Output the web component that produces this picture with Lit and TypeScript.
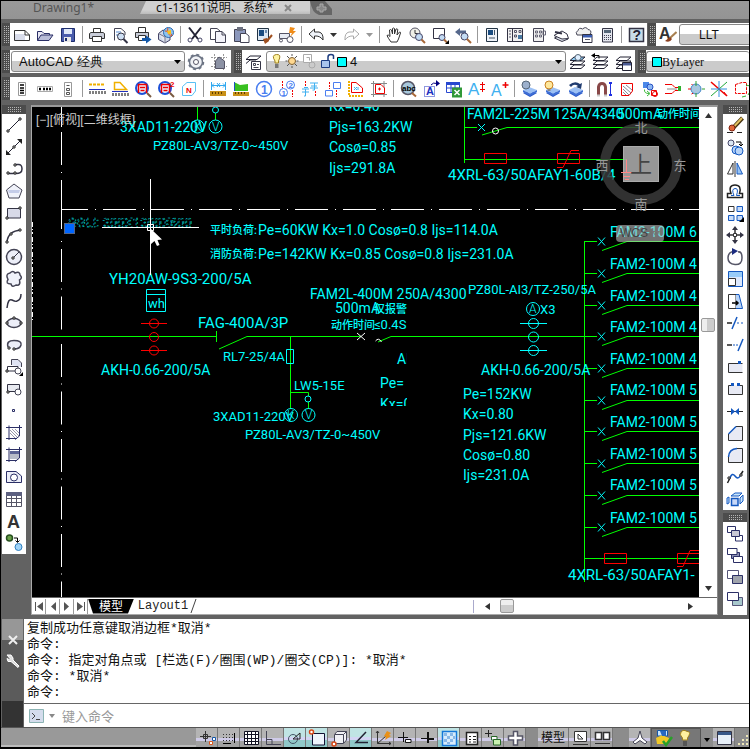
import { LitElement, html, svg, css, nothing, type SVGTemplateResult } from "lit";
import { customElement, property } from "lit/decorators.js";

const INK = "#223";
const NAVY = "#2b2f66";

/** A stroked (and optionally filled) path. */
const p = (d: string, stroke = INK, fill = "none", w = 1) =>
  svg`<path d=${d} stroke=${stroke} fill=${fill} stroke-width=${w}></path>`;
/** A filled shape without outline. */
const f = (d: string, fill: string) => svg`<path d=${d} fill=${fill}></path>`;
const c = (x: number, y: number, r: number, stroke = INK, fill = "none", w = 1) =>
  svg`<circle cx=${x} cy=${y} r=${r} stroke=${stroke} fill=${fill} stroke-width=${w}></circle>`;
const t = (x: number, y: number, size: number, fill: string, s: string) =>
  svg`<text x=${x} y=${y} font-size=${size} fill=${fill} font-weight="bold">${s}</text>`;
const node = (x: number, y: number) => p(`M${x - 1} ${y - 1}h2v2h-2z`, "#222", "#fff");

const sheets = (top = "#fff") => svg`
  ${p("M2 15.5L6 12H17L13 15.5z", INK, "#fff")}${p("M2 11.5L6 8H17L13 11.5z", INK, "#fff")}
  ${p("M2 7.5L6 4H17L13 7.5z", INK, top)}`;
const blueSheets = svg`${f("M3 13l6-3 8 3-7 4z", "#2b59c8")}${f("M3 10l6-3 8 3-7 4z", "#9cc0f4")}${f("M3 10l7 4 7-4v2l-7 4-7-4z", "#3f6fd6")}`;
const glass = svg`${c(8, 8, 6, "#1c50d8", "#eaf2ff", 2)}${p("M13 13l4 4", "#7a5a40", "none", 2)}`;
const findGlyph = p("M4.500 13V4.500H12.500V13M6 7.500h5M6.500 10.500h4", "#e00", "none", 1.500);

const ICONS: Record<string, SVGTemplateResult> = {
  new: svg`${p("M1.5 4.5H12L16.5 9V14.5H1.5z", "#333", "#fff")}${f("M2 8h10v6H2z", "#d8dcea")}${p("M12 4.5V9H16.5", "#333")}`,
  open: svg`${p("M1.5 14.5V5.5H6L8 7.5H13.5V9", NAVY, "#e8e8f4")}${p("M1.5 14.5L5 9H17L13 14.5z", NAVY, "#b8bcd8")}`,
  save: svg`${p("M2.5 2.5H15.5V15.5H2.5z", "#1c2c6c", "#4a5cac")}${f("M5 3h8v5H5z", "#dfe8f8")}${f("M5 11h7v5H5z", "#e8e8e8")}${f("M6 12h2v3H6z", "#1c2c6c")}`,
  print: svg`${p("M5.5 7V2.5H12.5V7", "#333", "#fff")}${p("M1.5 7.5L3 6.5H15L16.5 7.5V12.5H1.5z", "#333", "#c8ccd8")}${p("M4.5 10.5H13.5V15.5H4.5z", "#333", "#fff")}`,
  preview: svg`${p("M3.5 14.5V2.5H10L14 6V9", "#445", "#fff")}${f("M5 5h5v2H5zM5 8h3v2H5z", "#a8c4e8")}${c(10, 10.5, 3.5, "#334", "#cfe0f4")}${p("M12.5 13l4 4", "#334", "none", 2)}`,
  publish: svg`${p("M4.5 6V1.5H11.5V6", "#333", "#fff")}${p("M1.5 6.5H14.5V11.5H1.5z", "#333", "#c8ccd8")}${p("M4.5 9.5H11.5V14.5H4.5z", "#333", "#fff")}${f("M8 12h4V9.5l5.5 4L12 17.5V15H8z", "#1458a8")}`,
  globe: svg`${p("M1.5 7.5L6 4L13 8V14L8 17L1.5 13.5z", "#446", "#d0d8e8")}${p("M1.5 7.5L8 11V17", "#778", "#e4e8f2")}${c(11.5, 6.5, 5, "#2a68b0", "#8cc4f0")}${p("M8 5c4 0 6 2 7 5M11 2c-1 3 0 6 3 8.500", "#e84c18")}${f("M10 5l4-1v4h-3z", "#f8c018")}`,
  cut: svg`${p("M3 1.5L12 13M15 1.5L6 13", "#223", "none", 2)}${c(4, 14, 2, "#446")}${c(14, 14, 2, "#446")}`,
  copy: svg`${p("M1.5 2.5H8L11 5V13.5H1.5z", "#445", "#fff")}${p("M6.5 5.5H13L16.5 9V16.5H6.5z", "#445", "#f4f4fa")}${p("M13 5.5V9H16.5", "#445")}`,
  paste: svg`${p("M2.5 3.5H13.5V15.5H2.5z", "#445", "#8c98bc")}${f("M5 1h6v4H5z", "#6c7080")}${p("M8.5 7.5H14L17 10V16.5H8.5z", "#445", "#fff")}`,
  match: svg`${p("M2.5 2.5H13.5V14.5H2.5z", "#234", "#dce8f4")}${f("M4 4h5v6H4z", "#1a4c80")}${f("M10 4h2v3h-2z", "#6c8cb0")}${p("M17 9l-5 6", "#a05020", "none", 2)}${f("M8 13l4-1 2 3-4 3z", "#a05020")}`,
  block: svg`${p("M1.5 7.5H11.500V12.5H1.5z", "#556", "#e8ecf4")}${c(3, 14.5, 1.5, "#556", "#fff")}${c(12, 13.500, 3, "#556", "#fff")}${f("M12 1l5 1-2 3 3 0-6 6 2-4-3 0z", "#f08c18")}`,
  undo: svg`${p("M2 8L7.5 3V6H12Q16.5 7 16 14Q13 9.5 7.5 10V13z", "#333", "#f0f4fa")}`,
  redo: svg`${p("M16 8L10.500 3V6H6Q1.500 7 2 14Q5 9.500 10.500 10V13z", "#aaa", "#fff")}`,
  hand: svg`${p("M6 16Q3 12 2 9.500Q3 8 5 10.500L4.500 4Q5.500 3 6.500 4L7.500 8V2.500Q8.500 1.500 9.500 2.500V8L11 3Q12 2.500 12.800 3.500L12 9L14.500 6Q15.800 6 15.500 7L13.500 13L12 16z", "#333", "#fff")}`,
  zoomrt: svg`${c(7, 7, 5, "#556", "#f0f0e8")}${p("M7 4V7.500H10", "#333")}${c(11, 11, 3.500, "#446", "#c4dcf4")}${p("M13.500 13.500L17 17", "#a86838", "none", 2)}`,
  zoomwin: svg`${p("M2.500 2.500H13.500V12.500H2.500z", "#334", "#fff")}${c(11, 11.500, 3, "#446", "#c4dcf4")}${p("M13 13.500L16 16.500", "#a86838", "none", 2)}${f("M18 14v4h-4z", "#000")}`,
  zoomprev: svg`${f("M1 6l5-4v2.500h6v3H6V10z", "#56688c")}${c(10.500, 10.500, 3.500, "#446", "#c4dcf4")}${p("M13 13L17 17", "#a86838", "none", 2)}`,
  props: svg`${p("M3.500 2.500H14.500V15.500H3.500z", "#234", "#eef2f8")}${f("M5 4h5v5H5z", "#1a4c80")}${p("M11.500 4v5M6 12h6", "#456")}`,
  center: svg`${p("M1.500 2.500H16.500V15.500H1.500zM6.500 2.500V15.500", "#334", "#f2f2f2")}${p("M8.500 4.500h2v2h-2zM13 4.500h2v2h-2zM8.500 9h2v2h-2zM3 5h2M3 8h2M3 11h2", "#556")}${f("M12 9h4v4h-4z", "#4878a0")}`,
  palettes: svg`${p("M4.500 2.500H14.500V15.500H4.500z", "#445", "#f0f0f0")}${p("M6.500 5h2v2h-2zM10.500 5h2v2h-2zM6.500 9h2v2h-2zM10.500 9h2v2h-2zM14 5h2.500v4H14z", "#667")}`,
  sheetset: svg`${p("M2.500 12L8 9L16 13L10 15.500z", "#334", "#dde0ea")}${p("M2 9.500L10 5L15 8L16.500 12.500L10 13z", "#334", "#fff")}${p("M3 6l7 1.500", "#334", "none", 2)}`,
  markup: svg`${p("M2 9Q0 6 3 4.500Q4 1 7.500 3Q11 0 13 3.500Q17 4 15.500 8L13 9H3z", "#445", "#f0f0f0")}${p("M7.500 8.500H17V16.500H7.500z", "#334", "#fff")}${f("M8 9h9v2.500H8z", "#3a5cb0")}${p("M10 13.500h5", "#556")}`,
  calc: svg`${p("M4.500 2.500H14.500V16H4.500z", "#334", "#e4e6ee")}${f("M6 4h7v3H6z", "#567")}<path d="M6 9.500h7M6 11.500h7M6 13.500h7" stroke="#445" stroke-dasharray="1 1"></path>`,
  help: svg`${p("M2.500 2.500H16.500V15.500H2.500z", "#334", "#c8dce8", 1.500)}${t(5.500, 14, 14, "#223", "?")}`,
  textstyle: svg`<text x="0" y="13" font-size="16" font-weight="bold" fill="#333">A</text>${p("M17.500 6L11 12", "#a88050", "none", 2)}${f("M6 15l5-4 2 2q-2 4-7 2z", "#8c4020")}`,
  gear: svg`${c(9, 9, 6.500, "#6c7484", "#f0f2f6", 1.500)}<circle cx="9" cy="9" r="7.500" fill="none" stroke="#6c7484" stroke-width="1.500" stroke-dasharray="3 2.900"></circle>${c(9, 9, 2.500, "#556", "#fff")}`,
  workspace: svg`<path d="M4.500 1V17M1 4.500H17M13.500 1V17M1 13.500H17" stroke="#999" stroke-dasharray="2 1"></path>${p("M5.500 15.500V8L9 4L14.500 8V15.500z", "#556", "#8c92a4")}`,
  layerprops: svg`${p("M2 6.500L6 3H17L13 6.500z", INK, "#fff")}${p("M2 10.500L6 7H12", INK)}${p("M7.500 8.500H16.500V16.500H7.500z", "#334", "#fff")}${p("M9.500 10.500h2v2h-2zM13 11.500h2M9.500 14.500h5", "#445")}`,
  makecurrent: svg`${sheets("#8cc8f0")}${c(10, 4.500, 3, "#567", "#dfefff")}`,
  layerprev: svg`${sheets()}${f("M0 2.500l4-2.500v5z", "#000")}${p("M4 2.500h4v3", "#000")}`,
  layerstate: svg`${sheets()}${p("M8.500 9.500H17.500V17.500H8.500z", "#223", "#fff")}${f("M9 10h8v2.500H9z", "#4c5c94")}`,
  colvert: svg`${p("M5.500 2.500H12.500V15.500H5.500z", "#999", "#fff")}${p("M7 5h4M7 8h4M7 10.500h4M7 13h4", "#000", "none", 1.500)}`,
  rowhor: svg`${p("M1.500 6.500H16.500V11.500H1.500z", "#aaa", "#fff")}${p("M3 9h2M7 9h2M10 9h2M13 9h2", "#000", "none", 2.500)}`,
  colbox: svg`${p("M5.500 2.500H12.500V16.500H5.500z", "#999", "#fff")}${p("M7.500 5.500h3M7.500 8.500h3v2h-3zM7.500 12.500h3v2h-3z", "#555")}`,
  dimline: svg`<path d="M1 4.500H17" stroke="#f0b000" stroke-width="2" stroke-dasharray="3 1"></path>${p("M1 9.500H17", "#2030c0")}${p("M2 14V11M5 14V11M8 14V11M11 14V11M14 14V11M17 14V11", "#000")}`,
  dimarea: svg`${p("M3.500 9.500V2.500H9L15.500 9.500z", "#f0b000", "#fff", 1.500)}${p("M1 11.500H17", "#2030c0")}${p("M2 16V13M5 16V13M8 16V13M11 16V13M14 16V13M17 16V13", "#000")}`,
  findtext: svg`${glass}${findGlyph}`,
  findtext2: svg`${glass}${findGlyph}${t(13, 7, 8, "#e00", "2")}`,
  northtag: svg`${p("M2.500 15.500V6.500L7 2.500H15.500V11L12 15.500z", "#58c0f4", "#fff")}${t(6, 12.500, 8, "#e00", "N")}`,
  measure: svg`${p("M2.500 2V10M16.500 2V10M3 5.500H16M5 3.500l-2 2 2 2M14 3.500l2 2-2 2M8 3l3 4M11 3L8 7", "#30a8f0")}${f("M1 11h16v5H1z", "#c89018")}${p("M3.500 12v2M6.500 12v2M9.500 12v2M12.500 12v2", "#5c3c00")}`,
  area: svg`${f("M2 2L8 5L16 4V11H2z", "#38c020")}${p("M2.500 2V11", "#2050c0")}${f("M1 12h16v4H1z", "#c89018")}${p("M3.500 12v2M6.500 12v2M9.500 12v2M12.500 12v2", "#5c3c00")}`,
  one: svg`${c(9, 9, 7.500, "#4a7ef0", "#fff", 1.500)}${t(6, 13.500, 12, "#4a7ef0", "1")}`,
  onetwo: svg`${c(5.500, 12.500, 4, "#4a7ef0")}${t(3.500, 15.500, 8, "#4a7ef0", "1")}${c(12.500, 5, 4, "#4a7ef0")}${t(10.500, 8, 8, "#4a7ef0", "2")}<path d="M4.500 1v7M14.500 10v7" stroke="#e00" stroke-dasharray="2 1"></path>`,
  chars: svg`${p("M1 9h7M3 7.500h4M4.500 9V16H3M1 12h7", "#40b0f0")}${p("M9 3h8M10 6h6M13.500 3V10H11.500M9 8h8", "#40b0f0")}<path d="M4.500 1v6M14.500 11v6" stroke="#e00" stroke-dasharray="2 1"></path>`,
  boxes: svg`${p("M1.500 10.500H8.500V16H1.500zM9.500 2.500H16.500V8.500H9.500z", "#4a7ef0", "#fff")}<path d="M5.500 2v7M12.500 10v7" stroke="#e00" stroke-dasharray="2 1"></path>`,
  polyx: svg`${p("M4.500 2.500H9L15.500 8V12.500H4.500z", "#e00", "#fff")}<path d="M2 1v15h15" stroke="#f0b000" stroke-width="2" stroke-dasharray="2 1"></path>${p("M7 7l3 3M10 7L7 10M11 7v3", "#40b0f0")}`,
  polyplus: svg`${p("M3.500 1V17M1 14.500H17M14 1V17M1 3.500H17", "#888")}${p("M5.500 4.500H11L14.500 8V13.500H5.500z", "#e00", "#fff")}${p("M9.500 7.500v3M8 9h3", "#e00")}`,
  findabc: svg`${c(9, 8, 6.500, "#556", "#a8c8dc", 1.500)}${p("M13 13L17 16.500", "#a86838", "none", 2)}${t(3, 11, 8, "#000", "abc")}`,
  textbox: svg`<path d="M2.500 6.500H12.500V16.500H2.500z" fill="none" stroke="#2030c0" stroke-dasharray="1 1"></path>${t(4, 15, 11, "#2030c0", "A")}${p("M9 5Q11 2 15 3.500", "#000080")}${f("M14 0l4 3.500-4 3z", "#000080")}`,
  excel: svg`${p("M1.500 2.500H14.500V12.500H1.500zM1.500 8h13M6 4V12.500M10 4V12.500", "#2848d0", "#fff")}${f("M1 2h14v3H1z", "#2848d0")}${f("M7 7.500h10v10H7z", "#309838")}${p("M9.500 10l5 5M14.500 10l-5 5", "#fff", "none", 1.500)}`,
  textheight: svg`<text x="0" y="15" font-size="17" fill="#40b0f0">A</text>${p("M14.500 2v10M12 4.500h5M12 9.500h5", "#e00")}`,
  textplus: svg`<text x="0" y="16" font-size="16" fill="#40b0f0">A</text>${p("M14.500 2v6M11.500 5h6", "#e00", "none", 1.500)}`,
  layerfreeze: svg`${blueSheets}${c(6, 5, 4, "#567", "#9cb0cc")}`,
  layeron: svg`${blueSheets}${c(6, 5, 4, "#c88020", "#ffe89c")}${f("M4.500 9h3v2h-3z", "#888")}`,
  layermerge: svg`${blueSheets}${f("M3 5Q9 0 14 4l2-1-1 6-5-2 2-1Q8 3 5 7z", "#203c70")}`,
  magnet: svg`${p("M3.500 16V7Q4 3.500 7 3.500T10.500 7V16", "#884848", "none", 3)}${p("M2 15.500h3M9 15.500h3", "#ccc", "none", 2)}${p("M15.500 4V14", "#2030e0")}${f("M14 2h3v2h-3zM14 14h3v2h-3z", "#2030e0")}`,
  hatchpoly: svg`${p("M3.500 3.500H14.500V11L11 15.500H3.500z", "#e00", "#fff")}${p("M5 12l3 3M5 9l6 6M5 6l8 7M8 5l6 5", "#889", "none")}`,
  moveshapes: svg`${f("M2 2h6v6H2z", "#4a88e8")}${c(9, 7, 3, "#2850c0", "#8cb8f4")}${p("M10.500 10.500h5v5h-5z", "#e00")}${c(14, 14, 2.500, "#e00")}${p("M3.500 9.500Q3 13.500 8 13.500M6 11l3 2.500L6 16", "#38b838")}`,
  merge: svg`${p("M1 4.500H8L11 7.500H17M1 13.500H8L11 10.500H17", "#e00")}${p("M3 9h10", "#888")}${f("M14 6h3v5h-3z", "#30b030")}`,
  crossing: svg`${p("M4.500 4.500L14 9L4.500 14", "#e00")}${c(9, 9, 5, "#4488c8", "#a8c8e0")}${p("M9 1v5M9 13v4M15 9h3", "#30a030")}${p("M1 9h3", "#e00")}`,
  burst: svg`${p("M1 2l16 14", "#e00", "none", 1.500)}${p("M17 2L1 16", "#20a838")}${p("M9 1v16M1 9h16", "#3090e0")}${p("M14 12l3 4", "#e00")}`,
  rotatebox: svg`<path d="M2.500 4.500L9 2.500H13.500V13.500H2.500z" fill="#fff" stroke="#e00" stroke-dasharray="3 1"></path>${p("M15 15Q18 12 16.500 8M13 5l4 1M9 17l4-1", "#30b030")}`,

  line: svg`${p("M3 15L15 3")}${node(3, 15)}${node(15, 3)}`,
  xline: svg`${p("M3 15L15 3")}${node(9, 9)}${f("M1 17v-5l5 5zM17 1v5l-5-5z", "#222")}`,
  pline: svg`${p("M3 13.500H10Q17 14 17 9T13 4.500H10", "#334", "none", 1.500)}${node(3, 13)}${node(10, 13)}${node(10, 5)}`,
  polygon: svg`${p("M9 2L17 8L14 16H4L1.500 8z", "#445", "#f0f2fa")}${f("M3 8h12l-1 3H4z", "#c4cce8")}`,
  rect: svg`${p("M2.500 4.500H15.500V14H2.500z", "#334", "#d8dae8")}${node(2, 14)}${node(15, 4)}`,
  arc: svg`${p("M2 16Q3 5 16 4", "#334", "none", 1.500)}${node(2, 16)}${node(6, 8)}${node(15, 4)}`,
  circle: svg`${c(9, 9, 7.500, "#445", "#eceef8", 1.500)}${p("M9 9l5-5", "#334")}${node(8, 10)}`,
  cloud: svg`<path d="M5 3Q8 0 10 3Q15 1 15 5Q18 8 14.500 10Q16 16 11 15Q7 18 6 14Q0 14 3 9.500Q0 4 5 3z" fill="#f0f2fa" stroke="#445" stroke-width="1.500"></path>`,
  spline: svg`${p("M2 16Q3 6 7 8T12 9Q16 8 16 2", "#334", "none", 1.500)}`,
  ellipse: svg`<ellipse cx="9" cy="9" rx="7" ry="4.500" fill="#eceef8" stroke="#445" stroke-width="1.500"></ellipse>${node(2, 9)}${node(16, 9)}${node(9, 4)}`,
  ellipsearc: svg`${p("M3 11Q1 4.500 9 4.500T16 9Q15 13 9 13", "#445", "#eceef8", 1.500)}${node(4, 12)}${node(9, 13)}`,
  insert: svg`${p("M6.500 7V1.500H13L16.500 5V9", "#445", "#e0e4f4")}${p("M2.500 8.500H13V13H2.500z", "#334", "#fff")}${c(13, 13, 3, "#445", "#fff")}${node(2, 13)}${f("M18 14v4h-4z", "#000")}`,
  makeblock: svg`${p("M2.500 4.500H14.500V11.500H2.500z", "#334", "#e8eaf0")}${c(13, 12, 3, "#445", "#fff")}${node(3, 12)}`,
  point: svg`${p("M7.500 7.500h2v2h-2z", NAVY, "#fff")}`,
  hatch: svg`${p("M4 1.500V16M1 3.500H17M14.500 1V12L10 15.500M1 14.500H12", NAVY)}${p("M5 6l7 7M5 9l5 5M7 5l7 7M10 5l4 4", "#99a")}`,
  gradient: svg`${f("M5 5h9v3H5z", "#5c6494")}${f("M5 8h9v5H5z", "#b8bcc8")}${p("M4 1.500V16M1 3.500H17M14.500 1V12L10 15.500M1 14.500H12", NAVY)}`,
  region: svg`${p("M1.500 3.500H11L16.500 8V14.500H1.500z", NAVY, "#eceef8")}${c(9, 9.500, 3.500, NAVY, "#fff")}`,
  table: svg`${p("M1.500 2.500H16.500V16.500H1.500zM1.500 8.500H16.500M1.500 12.500H16.500M6.500 5V16M11.500 5V16", "#556", "#fff")}${f("M1 2h16v4H1z", "#5c6080")}`,
  mtext: svg`<text x="2" y="16" font-size="18" font-weight="bold" fill="#333">A</text>`,
  addsel: svg`${c(4.500, 4, 3, "#285020", "#68a048", 1.500)}${c(13.500, 13, 3.500, "#3080c0", "#a0d4f8")}${p("M9 4h3.500v4M10.500 6.500l2 2 2-2", "#000")}`,

  erase: svg`${p("M16.500 2L7 12", "#443010", "none", 4)}${p("M16 2L8 10.500", "#e0c060", "none", 2)}${c(6, 12, 3, "#802010", "#e06838")}${p("M1 16.500h6M11 16.500h5", "#222")}`,
  duplicate: svg`${c(5, 5, 3, "#446", "#dce8f4")}${c(10, 12, 4, "#1458c0", "#b8d4f8")}${c(13, 13, 4, "#1458c0", "#b8d4f8")}${p("M10 4h5v4M13 6l2 2 2-2", "#000")}`,
  mirror: svg`${p("M7 3V14H1.500z", "#333", "#fff")}${p("M11 3V14H16.500z", "#1458c0", "#98c4f4")}${p("M9 1v16", "#333")}`,
  offset: svg`${p("M1.500 15.500V11.500H5Q2 3 9 3T13.500 11.500H16.500V15.500z", "#222", "#fff", 1.500)}${p("M5 13.500H8Q5 7 9 6.500T10.500 13.500H14", "#1458c0")}`,
  array: svg`${p("M2.500 2.500H8V7.500H2.500z", "#333", "#fff")}${p("M11 2.500H16.500V7.500H11zM2.500 11.500H8V16.500H2.500zM11 11.500H16.500V16.500H11z", "#1458c0", "#c8dcf8")}${f("M18 13v5h-5z", "#000")}`,
  move: svg`${p("M9 4v3M9 11v3M4 9h3M11 9h3", "#333", "none", 1.500)}${f("M9 0l3 4H6zM9 18l3-4H6zM0 9l4-3v6zM18 9l-4-3v6z", "#334")}${p("M7.500 7.500h3v3h-3z", "#333", "#fff")}`,
  rotate: svg`${p("M8 3.500Q2 4 2 10T9 16.500T16 10T12 4", "#556", "none", 1.500)}${f("M6 0l6 3-6 4z", "#1c2c80")}`,
  scale: svg`${p("M2.500 1.500H16.500V16.500H2.500z", "#1458c0", "#98ccf8")}${f("M3 7h13v9H3z", "#dce8fc")}${p("M2.500 8.500H9.500V15.500H2.500z", "#333", "#fff")}`,
  stretch: svg`${p("M2.500 2.500H10V16.500H2.500z", "#333", "#fff")}${p("M10 2.500H13L16.500 16.500H10", "#1458c0", "#b8d4f8")}${p("M6 11h6M10 9l2 2-2 2", "#000", "none", 1.500)}`,
  trim: svg`${p("M1 9h5", "#222", "none", 1.500)}${p("M6 15L11 3", "#1458c0", "none", 1.500)}${p("M11 9h2M15 9h2", "#1458c0")}`,
  extend: svg`${p("M1 9h5", "#222", "none", 1.500)}${p("M7 9h2M10 9h2", "#1458c0")}${p("M12 15L17 3", "#1458c0", "none", 1.500)}`,
  breakpt: svg`${p("M16.500 5.500H2.500V14.500H16.500", "#333", "#e8eaf4")}${f("M12 3h3v3h-3z", "#1458c0")}`,
  breakat: svg`${p("M6 5.500H2.500V14.500H16.500V5.500H13", "#333", "#e8eaf4")}${f("M5 3h3v3H5zM11 3h3v3h-3z", "#1458c0")}`,
  join: svg`${p("M1 9.500h16", "#222")}${f("M5 6l4 3.500L5 13zM13 6L9 9.500l4 3.500z", "#1458c0")}`,
  chamfer: svg`${p("M2.500 10V16.500H16.500V2.500H10", "#333", "#e8eaf4")}${p("M2.500 10L10 2.500", "#1458c0", "none", 1.500)}`,
  fillet: svg`${p("M2.500 11V16.500H16.500V2.500H11", "#333", "#e8eaf4")}${p("M2.500 11Q3 3 11 2.500", "#1458c0", "#e8eaf4", 1.500)}`,
  blend: svg`${p("M1.500 15L4 10M14 8L17 3", "#222", "none", 1.500)}${p("M4 10Q6 4 9 8T14 8", "#1458c0", "none", 1.500)}${node(3, 10)}${node(15, 7)}`,
  explode: svg`${p("M5 6l4-3h7l-3 3zM14 8l3-3v6l-3 3zM1 8l2-1v6l-2 1z", "#1458c0", "#c8e4fc")}${p("M5.500 8.500H12V15.500H5.500z", "#1458c0", "#c8d8f8", 1.500)}`,
  front: svg`${p("M1.500 2.500H9.500V8.500H1.500z", NAVY, "#fff")}${p("M9.500 11.500H16.500V17H9.500z", NAVY, "#fff")}${p("M5.500 6.500H13.500V12.500H5.500z", NAVY, "#c8c8d4")}`,
  back: svg`${p("M5.500 6.500H13.500V12.500H5.500z", NAVY, "#8c90b4")}${p("M1.500 2.500H11V8.500H1.500zM7.500 10.500H16.500V16.500H7.500z", NAVY, "#fff")}`,
  above: svg`${p("M1.500 2.500H12.500V10.500H1.500z", "#557", "#fff")}${p("M6.500 7.500H16.500V15.500H6.500z", NAVY, "#a0a4ac")}`,
  under: svg`${p("M6.500 7.500H16.500V15.500H6.500z", "#557", "#a8c8cc")}${p("M1.500 2.500H12.500V10.500H1.500z", NAVY, "#fff")}`,
};

const STATUS: Record<string, SVGTemplateResult> = {
  infer: svg`${p("M7.500 2V13M2 7.500H13M5.500 5.500h4v4h-4z", "#333")}${p("M14.500 8.500h3v3h-3z", "#1458a8", "#fff")}${p("M11.500 12.500h3v3h-3z", "#d85820", "#fff")}`,
  snap: svg`<path d="M3 5.500h10M3 8.500h10M3 11.500h10" stroke="#333" stroke-dasharray="1 2"></path>${p("M3 14.500h8M14.500 4v10", "#000")}`,
  grid: svg`${p("M2.500 2.500H16.500V15.500H2.500zM5.500 2v14M9.500 2v14M13.500 2v14M2 5.500h15M2 9.500h15M2 12.500h15", "#112", "#fff")}`,
  ortho: svg`${p("M2.500 2V15.500H17M2.500 10.500H8V15.500", "#445", "none")}`,
  polar: svg`${c(7, 10, 4.500, "#456")}${p("M7 10L14 4V10z", "#222")}`,
  osnap: svg`${p("M4.500 4.500H16.500V16H4.500z", "#113", "#eef4fc")}${c(3.500, 3, 2, "#d84818", "#fff", 1.500)}`,
  osnap3d: svg`${p("M4.500 5.500L7 2.500H16.500V11L13.500 14.500H4.500z", "#445", "#f0f0f4")}${p("M13.500 14V5.500H5M13.500 5.500l3-3", "#445")}${c(4, 15, 2, "#d84818", "#fff", 1.500)}`,
  otrack: svg`${p("M14 3L4 13.500H16", "#223", "none", 1.500)}`,
  ducs: svg`${p("M3.500 2V14.500H17M3.500 14.500L12 7M2 4l1.500-2L5 4M15 13l2 1.500-2 1.500", "#333")}${f("M13 2l4 2-2 2 2 1-6 4 1-3-2-1z", "#e89018")}`,
  dyn: svg`${p("M7.500 3V13M2 8.500H12", "#111")}${p("M9.500 10.500H15V13.500H9.500z", "#111", "#fff")}`,
  lwt: svg`${p("M10 3V10M10 10V14", "#111", "none", 2)}${p("M3 9.500H16", "#111", "none", 1)}${f("M10 9h6v2h-6z", "#111")}`,
  tpy: svg`${p("M2.500 2.500H16.500V16.500H2.500z", "#1478d8", "#d8ecfc", 1.500)}${f("M4 4h3v3H4zM10 4h3v3h-3zM7 7h3v3H7zM13 7h2v3h-2zM4 10h3v3H4zM10 10h3v3h-3zM7 13h3v2H7z", "#88b8e8")}`,
  qp: svg`${p("M4.500 3.500H15.500V15.500H4.500z", "#222", "#fff", 1.500)}${p("M7 7.500h2M11 7.500h3M7 10.500h2M11 10.500h3M7 13h2M11 13h3", "#222")}`,
  cycle: svg`${p("M4.500 1v7M1 4.500h7", "#222")}${p("M7.500 7.500H13V11H7.500z", "#286828", "#fff")}${p("M9.500 10.500H16.500V16H9.500z", "#286828", "#c8f0b0")}`,
  monitor: svg`${p("M7.500 2.500h4v4.500h5v4h-5v5h-4v-5h-5V7h5z", "#556", "#fff", 1.500)}`,
  modelspace: svg`${p("M3.500 2.500H15.500V12.500H3.500z", "#333", "#fff")}${p("M7 5L7 10H12z", "#333")}${p("M2 15.500h15", "#333")}`,
  views: svg`${p("M2.500 3.500H8.500V10.500H2.500zM10.500 3.500H16.500V10.500H10.500z", "#333", "#fff", 1.500)}${p("M2 14.500h15", "#333")}`,
  anno: svg`${p("M9 2L11 9L16 13L14 15L9 11.500L4 15L2 13L7 9z", "#445", "#fff")}`,
  tray: svg`${p("M2.500 1.500H12.500V7H2.500z", "#1458a8", "#c8e4fc")}${f("M1 9l6-3 7 3-1 6H2z", "#f0c828")}${f("M5 2h6v5H7z", "#2868c0")}${p("M8 12l3 4L17 8", "#28a028", "none", 2.500)}`,
  bulb: svg`${p("M6.500 11V9Q3 5.500 5 3T9 1.500T13 3T11.500 9V11z", "#a08020", "#fff0a0")}${f("M7 12h4v5H7z", "#555")}`,
  clean: svg`${p("M2.500 2.500H16.500V15.500H2.500z", "#334", "#e8f0f8")}${f("M3 3h13v3H3z", "#385888")}`,
};

const ROW1 = "new open save | print preview publish globe | cut copy paste match block | undo v redo V | hand zoomrt zoomwin zoomprev | props center palettes sheetset markup calc | help".split(" ");
const ROW3 = "colvert rowhor colbox | dimline dimarea findtext findtext2 northtag | measure area one onetwo chars boxes polyx polyplus | findabc textbox excel textheight textplus | layerfreeze layeron layermerge | magnet hatchpoly moveshapes merge crossing burst rotatebox".split(" ");
const DRAW = "line xline pline polygon rect arc circle cloud spline ellipse ellipsearc insert makeblock point hatch gradient region table mtext addsel".split(" ");
const MODIFY = "erase duplicate mirror offset array move rotate scale stretch trim extend breakpt breakat join chamfer fillet blend explode".split(" ");
const ORDER = "front back above under".split(" ");
const TOGGLES = "infer snap grid ortho polar osnap osnap3d otrack ducs dyn lwt tpy qp cycle monitor".split(" ");
const ACTIVE = new Set(["polar", "osnap", "otrack", "tpy"]);

const base = css`
  * { box-sizing: border-box; }
  svg { display: block; }
  button {
    display: grid; place-items: center; border: 0; padding: 0; margin: 0;
    background: none; font: inherit; color: inherit; flex: none;
  }
`;

@customElement("cad-toolbar")
export class CadToolbar extends LitElement {
  @property({ attribute: false }) items: string[] = [];
  @property({ type: Boolean, reflect: true }) vertical = false;

  static styles = [base, css`
    :host { display: flex; flex: none; background: #fff; overflow: hidden; font-family: "Liberation Sans", sans-serif; }
    :host([vertical]) { flex-direction: column; width: 24px; }
    .grip { flex: none; display: grid; width: 8px; padding: 3px 1px; background: #4c4c4c; }
    .grip i {
      background: conic-gradient(#b4b4b4 25%, transparent 0) 0 0 / 2px 2px;
    }
    :host([vertical]) .grip { width: auto; height: 9px; padding: 2px 5px; }
    .tool { width: 23px; height: 23px; }
    :host([vertical]) .tool { width: 23px; height: 22px; }
    .arrow { width: 13px; }
    .sep { flex: none; width: 6px; margin: 3px 0; background: linear-gradient(#999, #999) center / 1px 100% no-repeat; }
  `];

  render() {
    return html`<div class="grip"><i></i></div>
      ${this.items.map((n) =>
        n === "|" ? html`<span class="sep"></span>`
        : n.toLowerCase() === "v" ? html`<button class="arrow" aria-label="history">
            <svg width="7" height="4" viewBox="0 0 7 4"><path d="M0 0h7L3.500 4z" fill=${n === "v" ? "#333" : "#999"}></path></svg></button>`
        : html`<button class="tool" aria-label=${n}><svg width="18" height="18" viewBox="0 0 18 18" fill="none">${ICONS[n]}</svg></button>`)}
      <slot></slot>`;
  }
}

/** CAD label: x, baseline, size, string */
type Label = [number, number, number, string];
const LABELS: Label[] = [
  [120, 132, 14, "3XAD11-220V"],
  [153, 150, 13, "PZ80L-AV3/TZ-0~450V"],
  [329, 111, 14, "Kx=0.40"],
  [329, 132, 14, "Pjs=163.2KW"],
  [329, 152, 14, "Cosø=0.85"],
  [329, 173, 14, "Ijs=291.8A"],
  [467, 119, 14, "FAM2L-225M 125A/4340"],
  [617, 119, 14, "500mA"],
  [657, 118, 11, "动作时间≤0.4S"],
  [448, 180, 15, "4XRL-63/50AFAY1-60B/4"],
  [210, 234, 11, "平时负荷:"],
  [258, 235, 14, "Pe=60KW Kx=1.0 Cosø=0.8 Ijs=114.0A"],
  [210, 258, 11, "消防负荷:"],
  [258, 259, 14, "Pe=142KW Kx=0.85 Cosø=0.8 Ijs=231.0A"],
  [109, 284, 15, "YH20AW-9S3-200/5A"],
  [148, 308, 13, "wh"],
  [198, 328, 15, "FAG-400A/3P"],
  [223, 361, 13, "RL7-25/4A"],
  [101, 375, 14, "AKH-0.66-200/5A"],
  [213, 421, 13, "3XAD11-220V"],
  [294, 390, 13, "LW5-15E"],
  [245, 439, 13, "PZ80L-AV3/TZ-0~450V"],
  [310, 299, 14, "FAM2L-400M 250A/4300"],
  [468, 294, 13, "PZ80L-AI3/TZ-250/5A"],
  [335, 313, 14, "500mA"],
  [374, 313, 11, "仅报警"],
  [331, 329, 11, "动作时间"],
  [374, 329, 13, "≤0.4S"],
  [529, 313, 12, "A"],
  [540, 314, 13, "X3"],
  [481, 375, 14, "AKH-0.66-200/5A"],
  [463, 399, 14, "Pe=152KW"],
  [463, 419, 14, "Kx=0.80"],
  [463, 440, 14, "Pjs=121.6KW"],
  [463, 460, 14, "Cosø=0.80"],
  [463, 480, 14, "Ijs=231.0A"],
  [568, 580, 15, "4XRL-63/50AFAY1-"],
  [194, 131, 12, "K"], [212, 131, 12, "V"],
  [287, 419, 12, "K"], [305, 419, 12, "V"],
];
/** Branch circuits: wire height, label baseline, trailing digit */
const BRANCHES: [number, number, string][] = [
  [241.5, 237, "6"], [273.5, 269, "4"], [305.5, 301, "4"], [336.5, 332, "4"], [368.5, 364, "4"],
  [400.5, 395, "5"], [431.5, 427, "5"], [463.5, 459, "5"], [495.5, 490, "5"], [527.5, 523, "5"],
];

@customElement("cad-drawing")
export class CadDrawing extends LitElement {
  static styles = [base, css`
    :host { display: block; position: relative; overflow: hidden; background: #000; }
    .sheet { position: absolute; inset: 0; width: 100%; height: 100%; font-family: Roboto, "Noto Sans CJK SC", sans-serif; font-weight: 400; }
    .g { stroke: #0f0; fill: none; }
    .c { stroke: #0ff; fill: none; }
    .r { stroke: #f00; fill: none; }
    .w { stroke: #fff; fill: none; }
    .lab { fill: #0ff; }
    .s11 { font-size: 11px; font-weight: 500; }
    .s12 { font-size: 12px; font-weight: 300; }
    .s13 { font-size: 13px; } .s14 { font-size: 14px; } .s15 { font-size: 15px; }
    .ghost { fill: none; stroke: #0ff; stroke-width: .5px; stroke-dasharray: 2 2; font-size: 13px; }
    .view { position: absolute; left: 4px; top: 5px; display: flex; color: #ccc; font: 12px/16px "Liberation Sans", "Noto Sans CJK SC", sans-serif; }
    .cube { position: absolute; right: 12px; top: 8px; font-family: "Noto Sans CJK SC", sans-serif; }
    .wcs { position: absolute; right: 35px; top: 118px; width: 48px; height: 17px; border-radius: 4px; background: rgb(190 190 190 / 60%); color: #444; font: 12px/17px "Liberation Sans", sans-serif; display: flex; gap: 4px; justify-content: center; align-items: center; }
  `];

  render() {
    return html`
      <svg class="sheet" aria-label="drawing"><g transform="translate(-32 -107)">
        <path class="w" d="M61.500 107V127M61.500 132V165M61.500 172v1M61.500 180V229M61.500 241v1"></path>
        <line class="w" x1="61.500" x2="61.500" y1="249" y2="597" stroke-dasharray="33 6.500 1 7"></line>
        <line class="w" x1="62" x2="2000" y1="209.500" y2="209.500" stroke-dasharray="33 7 1 7" stroke-dashoffset="7"></line>
        <line class="w" x1="32.500" x2="32.500" y1="222" y2="322" stroke-dasharray="5 2 1 2 2 3"></line>
        <path class="g" d="M197.500 107V120M215.500 113V120M464.500 107V163M464 127.500H477M482 135L507 127.500H2000M464 159.500H627
          M32 336.500H216.500M216.500 331V342M219 349L247 336.500H361M290.500 336V409M290 392.500H308.500V396M308.500 402V409
          M378 342L391 336.500H597M584.500 241V582M585 558.500H2000"></path>
        <path class="r" d="M484.500 153.500H506.500V163.500H484.500zM557.500 153.500H579.500V163.500H557.500zM557 167.500H563L571 150.500H579
          M604.500 553.500H626.500V563.500H604.500zM677.500 553.500H701V563.500H677.500zM677 566.500H683L690 550.500H701M141 323.500H167M141 350.500H167"></path>
        ${[323.500, 337, 350.500].map((y) => svg`<circle class="r" cx="154" cy=${y} r="4.500"></circle><circle class="c" cx="533.500" cy=${y} r="5"></circle>`)}
        <path class="c" d="M520 323.500H547M520 350.500H547M146.500 289.500H165.500V311.500H146.500zM146 294.500H165M286.500 349.500H293.500V363.500H286.500z
          M478 124l7 7M485 124l-7 7"></path>
        ${[[197.500, 126.500, 6.500], [215.500, 126.500, 6.500], [215.500, 110, 3], [291, 415, 6.500], [308.500, 415, 6.500], [308, 399, 3], [533, 309, 6.500]].map(
          ([x, y, r]) => svg`<circle class="c" cx=${x} cy=${y} r=${r}></circle>`)}
        <path class="w" d="M357 333l8 7M365 333l-8 7M375.500 341q3-4 6 1"></path>
        <circle class="w" cx="495.500" cy="131" r="3"></circle>
        ${BRANCHES.map(([y, b, n]) => svg`
          <path class="g" d=${`M585 ${y}H597M602 ${y + 9}L627 ${y}H2000`}></path>
          <path class="c" d=${`M598 ${y - 4}l7 8M605 ${y - 4}l-7 8`}></path>
          <text class="lab s14" x="610" y=${b}>FAM2-100M ${n}</text>`)}
        ${LABELS.map(([x, y, s, v]) => svg`<text class=${`lab s${s}`} x=${x} y=${y}>${v}</text>`)}
        <svg x="380" y="350" width="27" height="56" viewBox="380 350 27 56">
          <text class="lab s14" x="397" y="364">AK</text>
          <text class="lab s14" x="380" y="388">Pe=</text>
          <text class="lab s14" x="380" y="409">Kx=0</text>
        </svg>
        <text class="ghost" x="68" y="227">GGLI: 200X1200X600</text>
        <rect x="64.500" y="223.500" width="10" height="10" fill="#06f" stroke="#568"></rect>
        <path class="w" d="M150.500 179V275M102 227.500H199M147.500 224.500h6v6h-6z"></path>
        <path d="M151 229V244L154.500 241L157 246L159.500 245L157.500 240L162 239.500z" fill="#fff"></path>
      </g></svg>
      <div class="view"><span>[−]</span><span>[俯视]</span><span>[二维线框]</span></div>
      <svg class="cube" width="92" height="96" viewBox="0 0 92 96">
        <circle cx="46" cy="49" r="36" fill="none" stroke="#3a3a3a" stroke-opacity=".85" stroke-width="10"></circle>
        <rect x="28.500" y="31.500" width="35" height="35" fill="#a4a4a4" fill-opacity=".92" stroke="#aaa"></rect>
        <path d="M31.500 44.500V57.500M26 57.500H37M28 61.500H35M30 64.500H34" fill="none" stroke="#f88"></path>
        <g text-anchor="middle" font-size="13" fill="#999">
          <text x="46" y="17">北</text><text x="85" y="55">东</text><text x="46" y="94">南</text><text x="7" y="55">西</text>
          <text x="46" y="57" font-size="22" fill="#444">上</text>
        </g>
      </svg>
      <div class="wcs"><span>WCS</span><svg width="8" height="6" viewBox="0 0 8 6"><path d="M.5 .5h7L4 5z" fill="none" stroke="#777"></path></svg></div>`;
  }
}

@customElement("app-root")
export class AppRoot extends LitElement {
  static styles = [base, css`
    :host { display: flex; flex-direction: column; box-sizing: border-box; height: 100vh; background: #626262; border: 1px solid #000; border-bottom-width: 2px; overflow: hidden;
      font: 12px/16px "Noto Sans", "Noto Sans CJK SC", sans-serif; color: #222; }
    .tabs { display: flex; flex: none; height: 18px; background: linear-gradient(#999, #949494); }
    .tab { height: 13px; line-height: 13px; white-space: nowrap; }
    .tab.idle { width: 139px; padding-left: 8px; color: #555; display: flex; justify-content: center; padding-right: 22px; }
    .tab.on { width: 170px; display: flex; align-items: center; justify-content: flex-start; gap: 11px; padding-left: 16px; color: #111;
      background: linear-gradient(#d0d0d0 70%, #bbb); clip-path: polygon(6px 0, 100% 0, 100% 100%, 0 100%); }
    .edge { flex: none; }
    .rows { display: grid; flex: none; grid-auto-rows: 23px; gap: 4px; margin: 4px 0 5px 1px; }
    .row { display: flex; gap: 1px; min-width: 0; }
    .row.wide { gap: 3px; }
    .fill { flex: 1; min-width: 0; }
    .combo { position: relative; display: flex; margin: 1px 0; flex: none; }
    select { appearance: none; width: 100%; height: 21px; border: 1px solid #888; border-radius: 3px; padding: 0 18px 0 13px; color: #111; font: inherit;
      background: linear-gradient(#fff 46%, #cbcbcb 46%); }
    .combo > .down { position: absolute; right: 4px; top: 9px; pointer-events: none; }
    .state { position: absolute; left: 6px; top: 2px; pointer-events: none; }
    .workspace { width: 174px; margin-left: 1px; }
    .workspace select { font-size: 13px; padding-left: 7px; }
    .layer { width: 300px; margin-left: 1px; }
    .layer select { padding-left: 83px; font-size: 13px; }
    .style { width: 90px; }
    .style select { padding-left: 19px; }
    .color { flex: 1; min-width: 0; }
    .color select { padding-left: 15px; font: 12px/16px "Liberation Serif", serif; border-right: 0; }
    .work { display: flex; flex: 1; min-height: 0; gap: 5px; padding: 0 2px 0 1px; }
    .rail { width: 24px; flex: none; display: flex; flex-direction: column; gap: 3px; overflow: hidden; padding-bottom: 4px; }
    .rail .last { flex: 1; }
    .frame { flex: 1; min-width: 0; display: grid; grid-template: 1fr 17px / 1fr 18px; border: 1px solid #aaa; border-top: 2px solid #999; border-right-color: #888; margin-bottom: 4px; background: #fff; }
    .vscroll { display: flex; flex-direction: column; align-items: center; padding: 6px 0; }
    .vscroll .gap1 { flex: 200; } .vscroll .gap2 { flex: 255; }
    .thumb { flex: none; width: 14px; height: 14px; border: 1px solid #999; border-radius: 2px; background: linear-gradient(90deg, #eee 40%, #ccc 40%); }
    .foot { grid-column: 1 / 3; display: flex; align-items: center; border-top: 1px solid #666; font-size: 12px; background: #fff; min-width: 0; }
    .nav { width: 14px; height: 15px; border-right: 1px solid #999; }
    .sheettab { height: 15px; line-height: 15px; }
    .sheettab.on { width: 46px; background: #000; color: #fff; clip-path: polygon(0 0, 46px 0, 40px 100%, 5px 100%); }
    .sheettab.lay { font: 12px/15px "Liberation Mono", monospace; width: 52px; margin-left: 3px; }
    .hscroll { margin-left: auto; display: flex; align-items: center; width: 45%; max-width: 244px; padding: 0 24px 0 11px; border-left: 1px solid #aac; height: 13px; }
    .hscroll .thumb { margin-left: 10px; background: linear-gradient(#eee 40%, #ccc 40%); }
    .hscroll .end { margin-left: auto; }
    .cmd { display: flex; flex: none; height: 108px; margin-left: 1px; }
    .side { width: 21px; flex: none; background: linear-gradient(#979797 21px, #5b5b5b 21px 82px, #333 82px); display: flex; flex-direction: column; align-items: center; gap: 9px; padding-top: 16px; }
    .pane { flex: 1; display: flex; flex-direction: column; background: #fff; margin-left: 1px; min-width: 0; }
    .log { flex: 1; margin: 0; padding: 2px 3px 0; font: 13px/16px "Liberation Mono", "Noto Sans CJK SC", monospace; color: #111; overflow: hidden; }
    .prompt { display: flex; align-items: center; height: 24px; border-top: 1px solid #666; padding: 0 5px; gap: 5px; }
    .prompt input { flex: 1; border: 0; outline: 0; padding: 0 0 0 2px; margin: 0; font: 13px/18px "Noto Sans CJK SC", sans-serif; background: none; min-width: 0; }
    .prompt input::placeholder { color: #999; opacity: 1; }
    .status { display: flex; flex: none; height: 20px; background: #8c8c8c; border-top: 1px solid #555; }
    .coords { flex: 1; background: #999; border-bottom: 2px solid #bbb; min-width: 0; }
    .st { width: 22px; border-right: 1px solid #777; background: linear-gradient(#b4b4b4 0 55%, #cfcbe8 55% 68%, #a2a2a2 68%); }
    .st.active { background: linear-gradient(#c0e4e4 0 50%, #d4d4f4 50% 62%, #90c8c8 62%); }
    .st.model { width: 31px; font-size: 12px; color: #111; }
    .sp { flex: none; width: 12px; }
    .sp.mid { width: 16px; }
    .tray { display: flex; align-items: center; width: 50px; background: #777; border: 1px solid #555; border-bottom: 0; flex: none; gap: 3px; padding-left: 3px; }
    .size { width: 14px; flex: none; display: grid; place-items: end; }
  `];

  private down(color = "#000") {
    return html`<svg class="down" width="7" height="4" viewBox="0 0 7 4"><path d="M0 0h7L3.500 4z" fill=${color}></path></svg>`;
  }
  private status(n: string) {
    return html`<button class="st ${ACTIVE.has(n) ? "active" : ""}" aria-label=${n}>
      <svg width="18" height="18" viewBox="0 0 18 18" fill="none">${STATUS[n] ?? nothing}</svg></button>`;
  }
  private nav(d: string) {
    return html`<button class="nav" aria-label="sheet"><svg width="10" height="9" viewBox="0 0 10 9"><path d=${d} fill="#555"></path></svg></button>`;
  }
  private icon(n: string) {
    return html`<button aria-label=${n}><svg width="23" height="18" viewBox="-2 0 23 18" fill="none">${ICONS[n]}</svg></button>`;
  }

  render() {
    return html`
      <div class="tabs">
        <button class="tab idle">Drawing1*</button>
        <button class="tab on">c1-13611说明、系统*
          <svg width="9" height="8" viewBox="0 0 9 8"><path d="M1 1l6 6M7 1L1 7" stroke="#888" stroke-width="2"></path></svg></button>
        <svg class="edge" width="26" height="15" viewBox="0 0 26 15"><path d="M0 0Q2 12 9 14H22V8L15 0z" fill="#666"></path><path d="M10 3h3v3h3v3h-3v2h-3V9H7V6h3z" fill="#888" stroke="#aaa"></path></svg>
      </div>

      <div class="rows">
        <div class="row">
          <cad-toolbar .items=${ROW1}></cad-toolbar>
          <cad-toolbar class="fill" .items=${["textstyle"]}>
            <span class="combo style"><select aria-label="text style"><option>LLT</option></select></span>
          </cad-toolbar>
        </div>
        <div class="row wide">
          <cad-toolbar>
            <span class="combo workspace"><select aria-label="workspace"><option>AutoCAD 经典</option></select>${this.down()}</span>
            ${["gear", "workspace"].map((n) => this.icon(n))}
          </cad-toolbar>
          <cad-toolbar>
            ${this.icon("layerprops")}
            <span class="combo layer"><select aria-label="layer"><option>4</option></select>
              <svg class="state" width="76" height="17" viewBox="0 0 76 17" fill="none">
                ${p("M3 10V8Q-1 2 4.500 1.500T6.500 8V10z", "#a08020", "#fff4a0")}${f("M3 11h3.500v4H3z", "#777")}
                ${c(20, 8, 3.500, "#806030", "#ffd890")}${p("M20 1v2M20 13v2M13.500 8h2M24.500 8h2M15 3l2 2M25 3l-2 2M15 13l2-2M25 13l-2-2", "#555")}
                ${p("M31.500 1.500h8v8h-8zM34.500 4.500h3v3", "#aaa", "#fff")}${c(40, 12, 3, "#aaa")}
                ${p("M49.500 7.500h8v7h-8z", "#1c3c80", "#a8c4ec")}${p("M56 7V4Q56 1.500 59 1.500T61.500 4V6", "#1c3c80", "none", 1.500)}
                ${p("M65.500 4.500h9v9h-9z", "#000", "#0ff")}
              </svg>${this.down()}</span>
            ${["makecurrent", "layerprev", "layerstate"].map((n) => this.icon(n))}
          </cad-toolbar>
          <cad-toolbar class="fill">
            <span class="combo color"><select aria-label="color"><option>ByLayer</option></select>
              <svg class="state" width="11" height="17" viewBox="0 0 11 17">${p("M.5 4.500h9v9h-9z", "#000", "#0ff")}</svg></span>
          </cad-toolbar>
        </div>
        <div class="row"><cad-toolbar class="fill" .items=${ROW3}></cad-toolbar></div>
      </div>

      <div class="work">
        <div class="rail"><cad-toolbar vertical .items=${DRAW}></cad-toolbar></div>
        <main class="frame">
          <cad-drawing></cad-drawing>
          <div class="vscroll">
            <svg width="7" height="5" viewBox="0 0 7 5"><path d="M3.500 0L7 5H0z" fill="#333"></path></svg>
            <span class="gap1"></span><span class="thumb"></span><span class="gap2"></span>
            <svg width="7" height="5" viewBox="0 0 7 5"><path d="M3.500 5L7 0H0z" fill="#333"></path></svg>
          </div>
          <div class="foot">
            ${this.nav("M1 0h1v9H1zM9 0v9L3 4.500z")}${this.nav("M8 0v9L3 4.500z")}${this.nav("M2 0v9L7 4.500z")}${this.nav("M8 0h1v9H8zM1 0v9L7 4.500z")}
            <button class="sheettab on">模型</button>
            <button class="sheettab lay">Layout1</button>
            <svg width="8" height="14" viewBox="0 0 8 14"><path d="M7 0L2 14" stroke="#444"></path></svg>
            <div class="hscroll">
              <svg width="5" height="7" viewBox="0 0 5 7"><path d="M0 3.500L5 0V7z" fill="#333"></path></svg>
              <span class="thumb"></span>
              <svg class="end" width="5" height="7" viewBox="0 0 5 7"><path d="M5 3.500L0 0V7z" fill="#333"></path></svg>
            </div>
          </div>
        </main>
        <div class="rail"><cad-toolbar vertical .items=${MODIFY}></cad-toolbar><cad-toolbar class="last" vertical .items=${ORDER}></cad-toolbar></div>
      </div>

      <div class="cmd">
        <div class="side">
          <svg width="10" height="10" viewBox="0 0 10 10"><path d="M1 1l8 8M9 1L1 9" stroke="#eee" stroke-width="2"></path></svg>
          <svg width="14" height="14" viewBox="0 0 14 14"><path d="M1 1l4 0 2 3 0 2 6 6-1 1.500-7-6-3 0-1-3 2 1 1-1z" fill="#ddd" stroke="#fff"></path></svg>
        </div>
        <div class="pane">
          <div class="log">
            <div>复制成功任意键取消边框*取消*</div>
            <div>命令:</div>
            <div>命令: 指定对角点或 [栏选(F)/圈围(WP)/圈交(CP)]: *取消*</div>
            <div>命令: *取消*</div>
            <div>命令:</div>
          </div>
          <label class="prompt">
            <svg width="15" height="14" viewBox="0 0 15 14"><path d="M.5 .5h14v13H.5z" fill="#d4dcec" stroke="#8cb4b4"></path><path d="M3 4l3 3-3 3M7 10.500h4" fill="none" stroke="#444"></path></svg>
            <svg width="6" height="4" viewBox="0 0 6 4"><path d="M0 0h6L3 4z" fill="#888"></path></svg>
            <input placeholder="键入命令" aria-label="键入命令" />
          </label>
        </div>
      </div>

      <footer class="status">
        <div class="coords"></div>
        ${TOGGLES.map((n) => this.status(n))}
        <span class="sp"></span>
        <button class="st model">模型</button>
        ${this.status("modelspace")}${this.status("views")}
        <span class="sp mid"></span>
        ${this.status("anno")}
        <div class="tray">
          <svg width="18" height="18" viewBox="0 0 18 18" fill="none">${STATUS.tray}</svg>
          <svg width="18" height="18" viewBox="0 0 18 18" fill="none">${STATUS.bulb}</svg>
        </div>
        <span class="sp"><svg width="12" height="18" viewBox="0 0 12 18"><path d="M3 10h6l-3 4z" fill="#000"></path></svg></span>
        ${this.status("clean")}
        <span class="size"><svg width="12" height="12" viewBox="0 0 12 12"><path d="M9 0h2v2H9zM5 4h2v2H5zM9 4h2v2H9zM1 8h2v2H1zM5 8h2v2H5zM9 8h2v2H9z" fill="#eee8b8"></path></svg></span>
      </footer>`;
  }
}
